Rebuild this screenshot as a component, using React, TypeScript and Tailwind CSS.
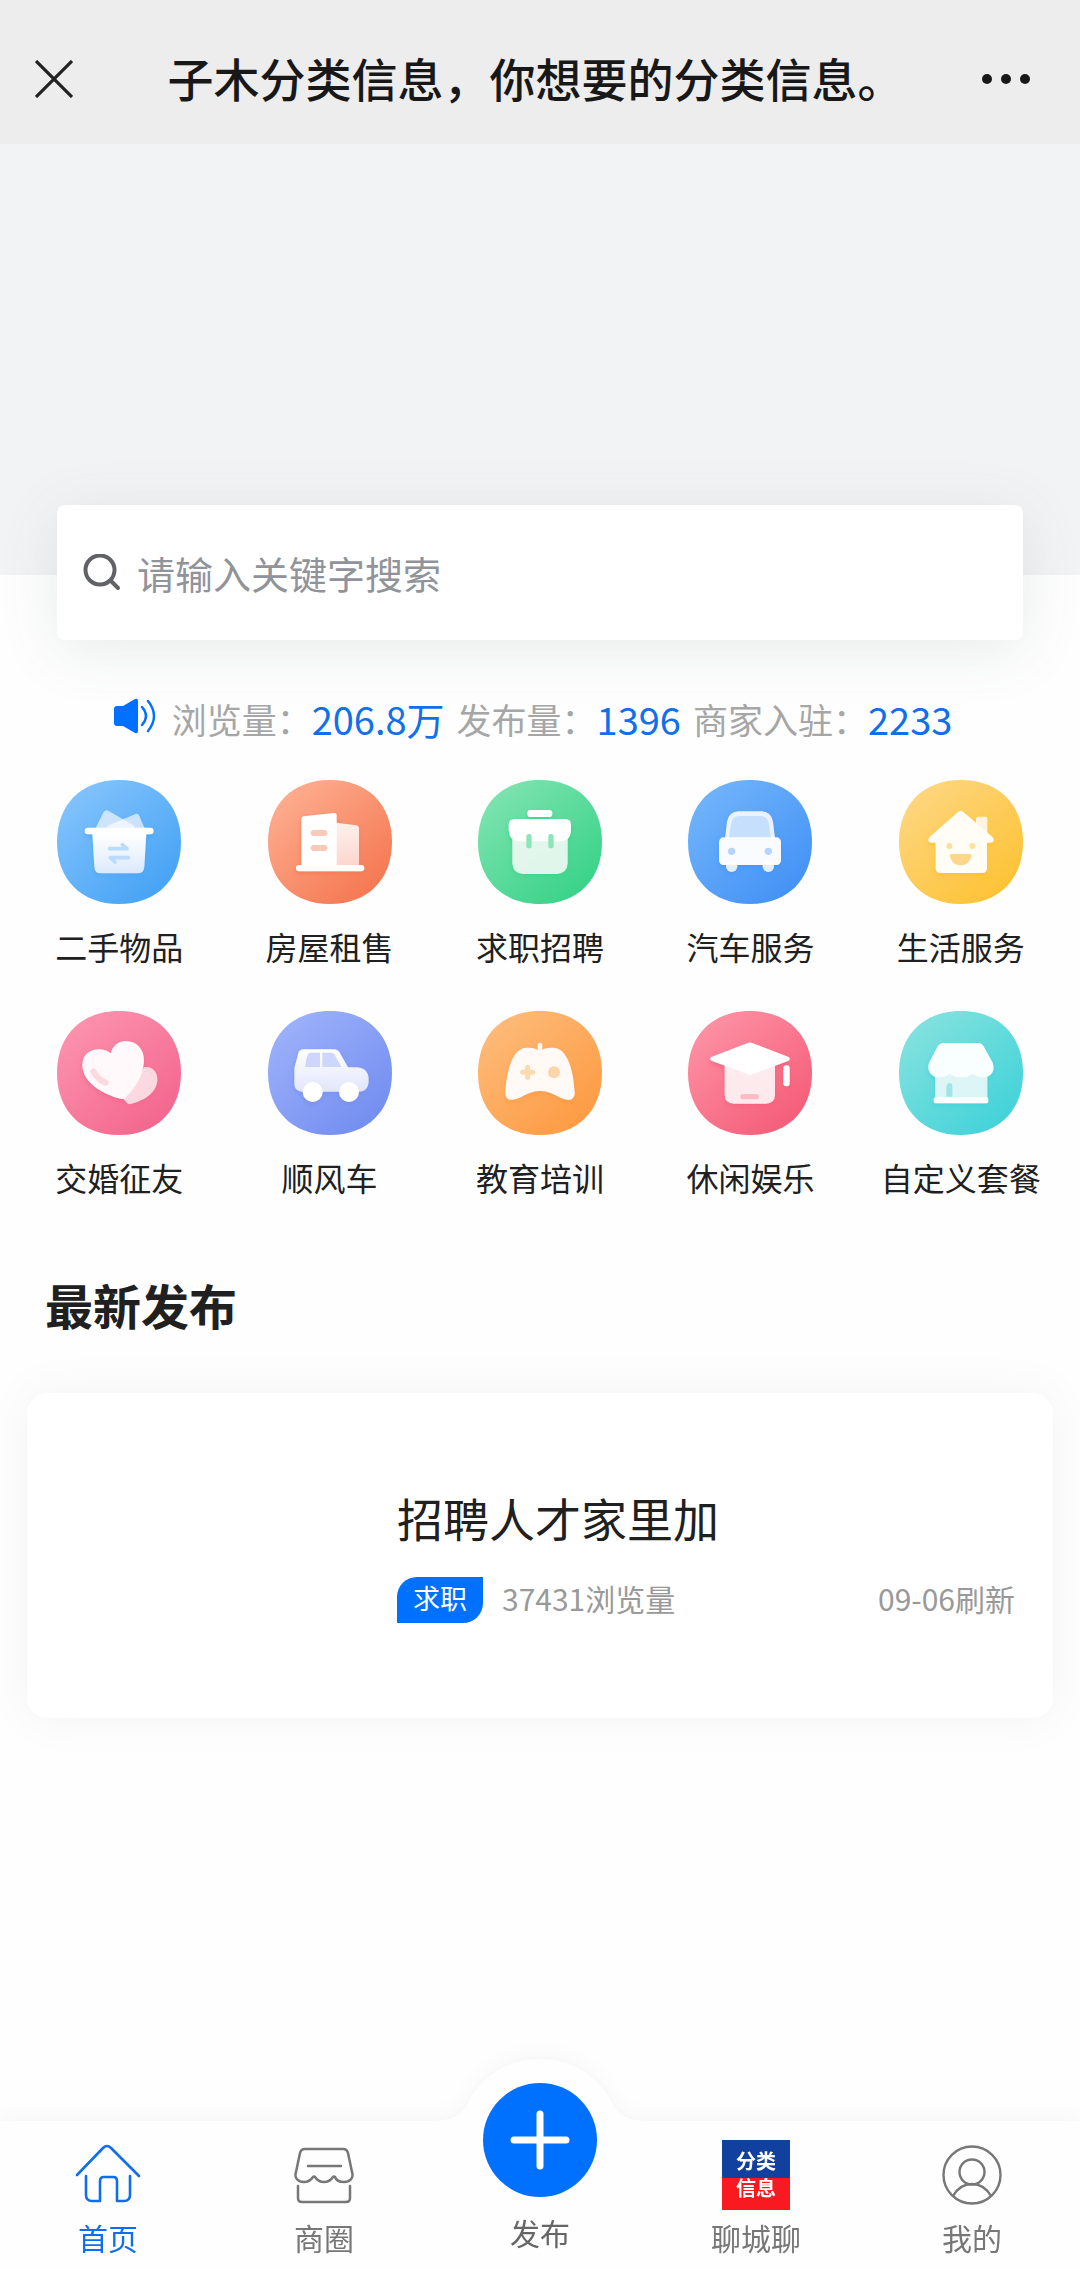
import type { ReactNode } from "react";

const SQUIRCLE =
  "M0 186 C0 73 73 0 186 0 C299 0 372 73 372 186 C372 299 299 372 186 372 C73 372 0 299 0 186 Z";

type Category = { id: string; label: string; from: string; to: string; art: ReactNode };

function Fade({ id, opacity }: { id: string; opacity: number }) {
  return (
    <linearGradient id={id} x1="0" y1="0" x2="0" y2="1">
      <stop offset="0" stopColor="#fff" />
      <stop offset="1" stopColor="#fff" stopOpacity={opacity} />
    </linearGradient>
  );
}

const categories: Category[] = [
  {
    id: "goods",
    label: "二手物品",
    from: "#84c3fc",
    to: "#44a2f4",
    art: (
      <>
        <path d="M113 150 L140 96 Q146 87 155 93 L232 137 V150 Z" fillOpacity=".62" />
        <path d="M150 138 L236 102 Q244 100 247 108 L265 150 H150 Z" fillOpacity=".62" />
        <path d="M106 160 H268 L262 260 Q260 280 242 280 H131 Q113 280 112 260 Z" fill="url(#fade-goods)" />
        <rect x="83" y="143" width="207" height="20" rx="10" />
        <path d="M158 206 H210 L196 194 M214 233 H160 L174 246" fill="none" stroke="#b9dcfb" strokeWidth="11" strokeLinecap="round" strokeLinejoin="round" />
      </>
    ),
  },
  {
    id: "house",
    label: "房屋租售",
    from: "#fdae90",
    to: "#f57650",
    art: (
      <>
        <path d="M204 128 L264 136 Q273 138 273 146 V260 H204 Z" fill="url(#fade-house)" fillOpacity=".85" />
        <path d="M100 118 Q100 110 108 109 L198 99 Q206 98 206 106 V260 H100 Z" />
        <rect x="84" y="255" width="205" height="19" rx="9" />
        <rect x="128" y="150" width="50" height="18" rx="9" fill="#fbc9b8" />
        <rect x="128" y="195" width="50" height="18" rx="9" fill="#fbc9b8" />
      </>
    ),
  },
  {
    id: "job",
    label: "求职招聘",
    from: "#7ee3b0",
    to: "#37d287",
    art: (
      <>
        <rect x="148" y="90" width="75" height="21" rx="10" />
        <path d="M103 150 H269 V250 Q267 281 236 282 H136 Q105 281 103 250 Z" fill="#fff" fillOpacity=".78" />
        <path d="M110 117 H261 Q279 117 279 135 V150 Q277 184 247 184 H126 Q94 184 92 150 V135 Q92 117 110 117 Z" />
        <rect x="145" y="162" width="16" height="43" rx="8" fill="#8be5b8" />
        <rect x="211" y="162" width="16" height="43" rx="8" fill="#8be5b8" />
      </>
    ),
  },
  {
    id: "car",
    label: "汽车服务",
    from: "#71b4fb",
    to: "#4291f5",
    art: (
      <>
        <circle cx="131" cy="259" r="17" fillOpacity=".8" />
        <circle cx="241" cy="259" r="17" fillOpacity=".8" />
        <path d="M111 176 L117 125 Q122 96 150 94 H222 Q250 96 255 125 L261 176 Z" fillOpacity=".85" />
        <path d="M123 174 L130 128 Q134 108 154 108 H218 Q238 108 242 128 L249 174 Z" fill="#c6dffc" />
        <rect x="93" y="172" width="186" height="83" rx="14" fillOpacity=".95" />
        <circle cx="131" cy="214" r="11" fill="#b4d5fb" />
        <circle cx="241" cy="214" r="11" fill="#b4d5fb" />
      </>
    ),
  },
  {
    id: "life",
    label: "生活服务",
    from: "#fdd680",
    to: "#fdc233",
    art: (
      <>
        <rect x="231" y="110" width="34" height="66" rx="6" fillOpacity=".78" />
        <path d="M176 97 Q185 89 194 97 L281 172 Q291 187 274 188 H98 Q81 187 91 172 Z" fill="#fffdf6" />
        <rect x="110" y="165" width="154" height="114" rx="14" fill="#fffdf6" />
        <circle cx="151" cy="198" r="9" fill="#fde0a0" />
        <circle cx="220" cy="198" r="9" fill="#fde0a0" />
        <path d="M158 222 H212 Q219 222 217 229 Q211 256 185 256 Q159 256 153 229 Q151 222 158 222 Z" fill="#fcd68a" />
      </>
    ),
  },
  {
    id: "love",
    label: "交婚征友",
    from: "#fc93ae",
    to: "#f3658c",
    art: (
      <>
        <path d="M262 168 C290 166 302 186 301 208 C299 248 255 272 220 279 Q212 281 208 274 L196 260 Z" fillOpacity=".68" />
        <path d="M161 127 C166 105 184 90 206 90 C240 90 262 116 261 150 C259 200 226 240 203 262 Q197 266 190 263 C150 254 76 220 76 162 C76 130 100 115 124 115 C140 115 152 119 161 127 Z" fill="#fff9fb" />
        <path d="M109 181 Q120 204 146 215" fill="none" stroke="#fdd9e2" strokeWidth="18" strokeLinecap="round" />
      </>
    ),
  },
  {
    id: "ride",
    label: "顺风车",
    from: "#9db1fa",
    to: "#728df0",
    art: (
      <>
        <path d="M106 115 H200 Q209 115 214 123 L240 169 H268 Q302 172 302 207 Q302 242 272 242 H102 Q79 240 79 218 V172 L91 126 Q94 115 106 115 Z" fill="url(#fade-ride)" />
        <path d="M126 125 H156 V168 H112 Q114 140 121 129 Q123 125 126 125 Z" fill="#ced6fb" />
        <path d="M163 125 H191 Q196 125 199 130 L220 168 H163 Z" fill="#ced6fb" />
        <circle cx="134" cy="243" r="30" />
        <circle cx="243" cy="243" r="30" />
      </>
    ),
  },
  {
    id: "edu",
    label: "教育培训",
    from: "#fdbb79",
    to: "#fd9a42",
    art: (
      <>
        <rect x="179" y="95" width="14" height="34" rx="7" fillOpacity=".85" />
        <path d="M185 121 C198 111 214 109 232 111 C266 117 286 170 290 245 C290 261 281 268 268 266 C236 262 226 240 186 240 C147 240 136 262 104 266 C91 268 82 261 82 245 C86 170 106 117 140 111 C157 109 173 111 185 121 Z" fill="#fffaf5" />
        <path d="M149 169 V199 M134 184 H164" fill="none" stroke="#fdd9b2" strokeWidth="15" strokeLinecap="round" />
        <circle cx="228" cy="184" r="18" fill="#fdd5aa" />
      </>
    ),
  },
  {
    id: "fun",
    label: "休闲娱乐",
    from: "#fd92a5",
    to: "#f55b77",
    art: (
      <>
        <path d="M110 150 H261 V252 Q260 277 234 278 H137 Q111 277 110 252 Z" fillOpacity=".82" />
        <path d="M179 96 Q186 93 193 96 L302 138 Q309 144 302 149 L195 189 Q187 193 179 189 L70 149 Q63 144 70 138 Z" />
        <rect x="157" y="249" width="56" height="16" rx="8" fill="#fbbcc8" />
        <rect x="286" y="163" width="19" height="63" rx="9" />
      </>
    ),
  },
  {
    id: "custom",
    label: "自定义套餐",
    from: "#84e2de",
    to: "#40d2d9",
    art: (
      <>
        <rect x="108" y="180" width="157" height="82" fillOpacity=".74" />
        <rect x="104" y="258" width="164" height="19" rx="8" />
        <path d="M132 96 H238 Q248 96 253 104 L281 155 C290 178 276 200 252 199 Q234 199 222 188 Q207 200 187 199 Q168 200 152 188 Q140 199 121 199 C97 200 82 178 90 155 L117 104 Q122 96 132 96 Z" fill="#f9fffe" />
        <path d="M142 257 V228 Q144 216 152 216 Q160 216 160 228 V257 Z" fill="#9fe5e6" />
      </>
    ),
  },
];

function CategoryIcon({ id, from, to, art }: Category) {
  return (
    <svg viewBox="0 0 372 372" className="size-[124px]" aria-hidden="true">
      <defs>
        <linearGradient id={`bg-${id}`} x1="0.1" y1="0.1" x2="0.85" y2="0.95">
          <stop offset="0" stopColor={from} />
          <stop offset="1" stopColor={to} />
        </linearGradient>
        <Fade id={`fade-${id}`} opacity={0.72} />
        <filter id={`shade-${id}`} x="-20%" y="-20%" width="140%" height="150%">
          <feDropShadow dx="0" dy="7" stdDeviation="8" floodColor={to} floodOpacity=".8" />
        </filter>
      </defs>
      <path d={SQUIRCLE} fill={`url(#bg-${id})`} />
      <g fill="#fff" filter={`url(#shade-${id})`}>
        {art}
      </g>
    </svg>
  );
}

const stats = [
  { label: "浏览量：", value: "206.8万" },
  { label: "发布量：", value: "1396" },
  { label: "商家入驻：", value: "2233" },
];

function HomeIcon() {
  return (
    <svg viewBox="0 0 68 70" className="h-[70px] w-[68px]" fill="none" stroke="currentColor" strokeWidth="2.6" strokeLinecap="round" strokeLinejoin="round" aria-hidden="true">
      <path d="M3 35 L29 8 Q33 4 37 8 L65 36" />
      <path d="M12 36 V55 Q12 61 18 61 H26 V41 Q26 37 30 37 H39 Q43 37 43 41 V61 H50 Q56 61 56 55 V36" />
    </svg>
  );
}

function ShopIcon() {
  return (
    <svg viewBox="0 0 68 70" className="h-[70px] w-[68px]" fill="none" stroke="currentColor" strokeWidth="2.5" strokeLinecap="round" strokeLinejoin="round" aria-hidden="true">
      <path d="M15 9 H53 Q57 9 58 13 L62 32 C64 38 60 42 54 42 C49 42 46 40 45 37 Q44 36 43 37 C41 40 38 42 34 42 C30 42 27 40 25 37 Q24 36 23 37 C21 40 18 42 14 42 C8 42 4 38 6 32 L10 13 Q11 9 15 9 Z" />
      <path d="M18 26 H51" />
      <path d="M8 46 V58 Q8 62 12 62 H56 Q60 62 60 58 V46" />
    </svg>
  );
}

function PersonIcon() {
  return (
    <svg viewBox="0 0 68 70" className="h-[70px] w-[68px]" fill="none" stroke="currentColor" strokeWidth="2.4" aria-hidden="true">
      <circle cx="34" cy="35" r="28.5" />
      <circle cx="34" cy="32" r="12.5" />
      <path d="M15 56 Q22 44 34 44 Q46 44 53 56" />
    </svg>
  );
}

function ChatLogo() {
  return (
    <span className="flex h-[70px] w-[68px] flex-col text-center text-[20px] font-bold text-white" aria-hidden="true">
      <span className="flex-1 bg-[#12409f] pt-1 leading-[34px]">分类</span>
      <span className="flex-1 bg-[#f81a20] leading-[20px]">信息</span>
    </span>
  );
}

function Tab({ label, active, children }: { label: string; active?: boolean; children: ReactNode }) {
  return (
    <a
      href="#"
      aria-current={active ? "page" : undefined}
      className={`flex flex-1 flex-col items-center gap-1.5 pt-[19px] text-[30px] leading-[42px] ${active ? "text-[#106eec]" : "text-[#777777]"}`}
    >
      {children}
      <span>{label}</span>
    </a>
  );
}

export default function App() {
  return (
    <div className="flex min-h-screen flex-col bg-[#fefefe] font-['Noto_Sans_CJK_SC','Noto_Sans',sans-serif] text-[#202020]">
      <header className="flex h-36 shrink-0 items-center bg-[#ededed] pt-3.5 pr-[50px] pl-[35px]">
        <button type="button" aria-label="关闭" className="text-[#222]">
          <svg viewBox="0 0 38 38" className="size-[38px]" stroke="currentColor" strokeWidth="3.2" aria-hidden="true">
            <path d="M1 1 L37 37 M37 1 L1 37" />
          </svg>
        </button>
        <h1 className="flex-1 pb-1 pl-4 text-center text-[46px] leading-[60px] font-medium text-[#181818]">
          子木分类信息，你想要的分类信息。
        </h1>
        <button type="button" aria-label="更多" className="flex w-12 justify-between">
          <span className="size-[10px] rounded-full bg-[#181818]" />
          <span className="size-[10px] rounded-full bg-[#181818]" />
          <span className="size-[10px] rounded-full bg-[#181818]" />
        </button>
      </header>

      <div className="h-[431px] shrink-0 bg-[#f2f3f5]" />

      <form
        className="relative mx-[57px] -mt-[70px] flex h-[135px] items-center gap-4 rounded-lg bg-white px-[26px] shadow-[0_10px_60px_rgba(70,100,90,0.12)]"
        onSubmit={(e) => e.preventDefault()}
      >
        <svg viewBox="0 0 38 38" className="size-[38px] shrink-0" fill="none" stroke="#606266" strokeWidth="4" strokeLinecap="round" aria-hidden="true">
          <circle cx="17" cy="16" r="14.5" />
          <path d="M28 27 L35 34" />
        </svg>
        <input
          type="search"
          aria-label="关键字搜索"
          placeholder="请输入关键字搜索"
          className="min-w-0 flex-1 bg-transparent text-[38px] leading-[54px] outline-none placeholder:text-[#909399]"
        />
      </form>

      <div className="mt-[52px] flex h-[54px] items-center justify-center pr-3.5 whitespace-nowrap">
        <svg viewBox="0 0 42 36" className="mr-4 mb-1.5 h-[36px] w-[42px]" aria-hidden="true">
          <path d="M3 8 H9 L21 1 Q24 0 24 3 V33 Q24 36 21 35 L9 28 H3 Q0 28 0 25 V11 Q0 8 3 8 Z" fill="#0070ff" />
          <path d="M28 9 Q36 18 28 27 M34 3 Q46 18 34 33" fill="none" stroke="#0070ff" strokeWidth="2.4" strokeLinecap="round" />
        </svg>
        <dl className="flex gap-3">
          {stats.map((s) => (
            <div key={s.label} className="flex items-center">
              <dt className="text-[35px] leading-[54px] text-[#a6a6a6]">{s.label}</dt>
              <dd className="text-[38px] leading-[54px] text-[#0f70ea]">{s.value}</dd>
            </div>
          ))}
        </dl>
      </div>

      <nav aria-label="分类" className="mt-[34px] grid grid-cols-5 gap-y-[41px] px-3.5">
        {categories.map((c) => (
          <a key={c.id} href="#" className="flex flex-col items-center gap-[18px] text-[32px] leading-[48px] whitespace-nowrap">
            <CategoryIcon {...c} />
            {c.label}
          </a>
        ))}
      </nav>

      <main className="px-[27px] pb-[200px]">
        <h2 className="mt-[68px] pl-[18px] text-[48px] leading-[70px] font-bold">最新发布</h2>
        <a href="#" className="mt-[54px] flex h-[325px] flex-col justify-center rounded-[20px] bg-white pr-[38px] pb-1 pl-[370px] shadow-[0_0_50px_rgba(0,0,0,0.05)]">
          <h3 className="text-[46px] leading-[64px]">招聘人才家里加</h3>
          <p className="mt-7 flex items-start text-[30px] leading-[42px] text-[#999999]">
            <span className="h-[46px] rounded-tl-[20px] rounded-br-[20px] bg-[#0070ff] px-4 text-[27px] text-white">求职</span>
            <span className="ml-[19px] flex-1">37431浏览量</span>
            <span>09-06刷新</span>
          </p>
        </a>
      </main>

      <nav aria-label="主导航" className="sticky bottom-0 mt-auto h-[148px] shrink-0">
        <div className="absolute inset-0 drop-shadow-[0_-4px_8px_rgba(40,60,60,0.04)]">
          <svg viewBox="0 0 220 66" className="absolute -top-[62px] left-1/2 h-[66px] w-[220px] -translate-x-1/2" fill="#fefefe" aria-hidden="true">
            <path d="M0 62 C20 62 30 58 38 44 C50 18 78 0 110 0 C142 0 170 18 182 44 C190 58 200 62 220 62 V66 H0 Z" />
          </svg>
          <div className="h-full bg-[#fefefe]" />
        </div>
        <div className="relative flex h-full">
          <Tab label="首页" active>
            <HomeIcon />
          </Tab>
          <Tab label="商圈">
            <ShopIcon />
          </Tab>
          <a href="#" className="-mt-[38px] flex flex-1 flex-col items-center gap-3.5 text-[30px] leading-[42px] text-[#666666]">
            <span className="flex size-[114px] items-center justify-center rounded-full bg-[#0070ff]">
              <svg viewBox="0 0 60 60" className="size-[60px]" stroke="#fff" strokeWidth="7" strokeLinecap="round" aria-hidden="true">
                <path d="M30 4 V56 M4 30 H56" />
              </svg>
            </span>
            <span>发布</span>
          </a>
          <Tab label="聊城聊">
            <ChatLogo />
          </Tab>
          <Tab label="我的">
            <PersonIcon />
          </Tab>
        </div>
      </nav>
    </div>
  );
}
